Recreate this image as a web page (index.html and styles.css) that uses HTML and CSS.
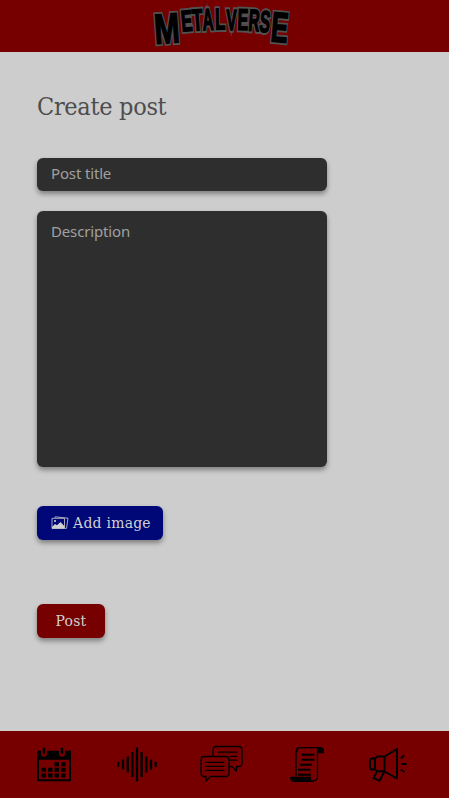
FILE: index.html
```
<!DOCTYPE html>
<html lang="en">
<head>
<meta charset="utf-8">
<meta name="viewport" content="width=device-width, initial-scale=1">
<title>Metalverse - Create post</title>
<link rel="stylesheet" href="styles.css">
</head>
<body>
<header class="topbar">
<svg class="logo" width="140" height="44" viewBox="151 4 140 44" role="img" aria-label="Metalverse">
<g class="logo-edge">
<text transform="translate(168 43) rotate(-4) scale(1.9 2.65)">M</text>
<text transform="translate(187.5 31) rotate(-5) scale(1.05 1.85)">E</text>
<text transform="translate(198 30.5) rotate(-4) scale(1.1 1.9)">T</text>
<text transform="translate(208.5 30) rotate(-3) scale(.95 1.9)">A</text>
<text transform="translate(220.5 29.5) rotate(-1) scale(1.05 1.87)">L</text>
<text transform="translate(231.5 29.5) scale(.95 1.87)">V</text>
<text transform="translate(242.5 30) rotate(2) scale(1 1.87)">E</text>
<text transform="translate(253.5 31) rotate(4) scale(.95 1.9)">R</text>
<text transform="translate(264 32) rotate(6) scale(.98 1.9)">S</text>
<text transform="translate(278.5 42) rotate(5) scale(1.6 2.65)">E</text>
</g>
<g class="logo-face">
<text transform="translate(168 43) rotate(-4) scale(1.9 2.65)">M</text>
<text transform="translate(187.5 31) rotate(-5) scale(1.05 1.85)">E</text>
<text transform="translate(198 30.5) rotate(-4) scale(1.1 1.9)">T</text>
<text transform="translate(208.5 30) rotate(-3) scale(.95 1.9)">A</text>
<text transform="translate(220.5 29.5) rotate(-1) scale(1.05 1.87)">L</text>
<text transform="translate(231.5 29.5) scale(.95 1.87)">V</text>
<text transform="translate(242.5 30) rotate(2) scale(1 1.87)">E</text>
<text transform="translate(253.5 31) rotate(4) scale(.95 1.9)">R</text>
<text transform="translate(264 32) rotate(6) scale(.98 1.9)">S</text>
<text transform="translate(278.5 42) rotate(5) scale(1.6 2.65)">E</text>
</g>
</svg>
</header>
<main class="content">
<h1 class="title">Create post</h1>
<form class="form">
<input class="field" type="text" placeholder="Post title">
<textarea class="field field-area" placeholder="Description"></textarea>
<button class="button button-image" type="button">
<svg class="picture" width="18" height="14" viewBox="0 0 18 14">
<path d="M1 2.3h12.5v10.2H1z"/><path d="M4 1.8 4.2.8l12.8 1.4-1.5 10.2h-1.5"/>
<circle cx="4" cy="5" r="1.1" class="solid"/><path class="solid" d="m1 11 3-3 2 1.3L9.5 6l4 4.2v2.3H1z"/>
</svg>
<span>Add image</span>
</button>
<button class="button button-post" type="button">Post</button>
</form>
</main>
<nav class="tabs">
<a class="tab"><svg width="36" height="38" viewBox="0 -1.7 36 38">
<path class="fill" d="M1 4h4v3q0 3 3 3t3-3V4h12v3q0 3 3 3t3-3V4h6v9H1zM6.7 1.5Q8 .3 9.3 1.5v5Q8 8.2 6.7 6.5zM24.7 1.5q1.3-1.2 2.6 0v5q-1.3 1.7-2.6 0z"/>
<path class="thick" d="M2 12v21.5h32V12"/>
<path class="fill" d="M33 4h2v9h-2zM18.5 15.5h4.5v4h-4.5zm6.5 0h4.5v4H25zM5.5 21H10v4H5.5zm6.5 0h4.5v4H12zm6.5 0h4.5v4h-4.5zm6.5 0h4.5v4H25zM5.5 26.8H10v4H5.5zm6.5 0h4.5v4H12zm6.5 0h4.5v4h-4.5zm6.5 0h4.5v4H25z"/>
</svg></a>
<a class="tab"><svg width="42" height="38" viewBox="0 -.5 42 38">
<path class="bars" d="M2.2 16.5v5M7 14v10M11.7 11v16M16.4 6.5v25M21 2v34M25.6 6.5v25M30.3 11v16M35 14v10M39.7 16.5v5"/>
</svg></a>
<a class="tab"><svg width="44" height="38" viewBox="1.5 0 44 38">
<path class="line" d="M13.5 10.5V5q0-3.5 3.5-3.5h22q3.5 0 3.5 3.5v13q0 3.5-3.5 3.5h-2v4.5L32.5 21.5H29.5M19 7.2h18.5M30.5 11.3h7M30.5 15.2h7"/>
<path class="line" d="M5 11.5h21q3.5 0 3.5 3.5v13q0 3.5-3.5 3.5H11L6.5 36v-4.5H5q-3.5 0-3.5-3.5V15q0-3.5 3.5-3.5zM6 17.3h18.5M6 21.3h18.5M6 25.3h18.5"/>
</svg></a>
<a class="tab"><svg width="36" height="38" viewBox="0 -.7 36 38">
<path class="line" d="M7 30V6q0-4 4-4h19M11 2q-3 0-3 4M24 35q4.5 0 4.5-4V6q0-4 3-4"/>
<path class="fill" d="M28 1.5h3.5q3.5 0 3.5 3v3h-7zM1 31h21v2q0 2 2.5 2.5v.7H5q-4 0-4-5.2z"/>
<path class="scroll-lines" d="M12.5 9h13M12.5 14h13M11 19h12M9 24h12.5M9 29h13"/>
</svg></a>
<a class="tab"><svg width="40" height="38" viewBox="0 -2 40 38">
<path class="horn" d="M7 11.5H4.5Q2 11.5 2 14v6q0 2.5 2.5 2.5H7zM7 11.5l2-2h7.5v14.8H9.5L7 22.5M16.5 9.5 29 2v29.5l-12.5-7M9.2 24.3 5.5 31l6 2.8 5-9.5M33.5 11l2-2M34 17h4M33.5 23l2.3 1.5"/>
</svg></a>
</nav>
</body>
</html>
```

FILE: styles.css
```
* { box-sizing: border-box; }
body {
  margin: 0;
  height: 798px;
  display: flex;
  flex-direction: column;
  background: #cdcdcd;
  font-family: "Noto Sans", sans-serif;
  overflow: hidden;
}
.topbar {
  height: 52px;
  padding-top: 4px;
  padding-right: 7px;
  display: flex;
  justify-content: center;
  background: #760000;
}
.logo { font: bold 16px "Liberation Sans", sans-serif; text-anchor: middle; overflow: visible; }
.logo text { vector-effect: non-scaling-stroke; }
.logo-edge { fill: #555; stroke: #525252; stroke-width: 4.2px; }
.logo-face { fill: #000; stroke: #000; stroke-width: 1.2px; }
.content { flex: 1; padding: 37px 37px 0; }
.title {
  margin: 0;
  height: 36px;
  color: #4d4d4d;
  font: 400 25px/36px "DejaVu Serif Condensed", "DejaVu Serif", serif;
  font-stretch: condensed;
  letter-spacing: -.3px;
}
.form { display: flex; flex-direction: column; align-items: flex-start; padding-top: 33px; }
.field {
  width: 290px;
  height: 33px;
  margin: 0 0 20px;
  padding: 0 14px 3px;
  border: 0;
  border-radius: 6px;
  background: #2e2e2e;
  box-shadow: 0 3px 5px rgba(0, 0, 0, .38);
  font: 400 15px/22px "Noto Sans", sans-serif;
  letter-spacing: -.15px;
}
.field::placeholder { color: #a0a0a0; opacity: 1; }
.field-area { height: 256px; margin-bottom: 39px; padding-top: 9px; resize: none; }
.button {
  display: flex;
  align-items: center;
  justify-content: center;
  height: 34px;
  padding: 0;
  border: 0;
  border-radius: 6px;
  color: #d0d0d0;
  font: 15.5px/20px "DejaVu Serif Condensed", "DejaVu Serif", serif;
  font-stretch: condensed;
  letter-spacing: .25px;
  box-shadow: 0 3px 5px rgba(0, 0, 0, .38);
}
.button-image { width: 126px; padding-left: 2px; gap: 4px; background: #000776; }
.button-post { width: 68px; margin-top: 64px; background: #760000; }
.picture { fill: none; stroke: #d0d0d0; stroke-width: .8; }
.picture .solid { fill: #d0d0d0; stroke: none; }
.tabs {
  height: 67.5px;
  padding: 0 41px 0 36px;
  display: flex;
  align-items: center;
  justify-content: space-between;
  background: #760000;
}
.tab { display: flex; }
.tab svg { overflow: visible; fill: none; stroke: #000; stroke-linejoin: round; stroke-linecap: round; }
.tab .fill { fill: #000; stroke: none; }
.line { stroke-width: 1.3; }
.tab .thick { stroke-width: 2; stroke-linejoin: miter; }
.bars { stroke-width: 2.3; stroke-linecap: butt; }
.scroll-lines { stroke-width: 2; stroke-linecap: butt; }
.horn { stroke-width: 2; }
```
